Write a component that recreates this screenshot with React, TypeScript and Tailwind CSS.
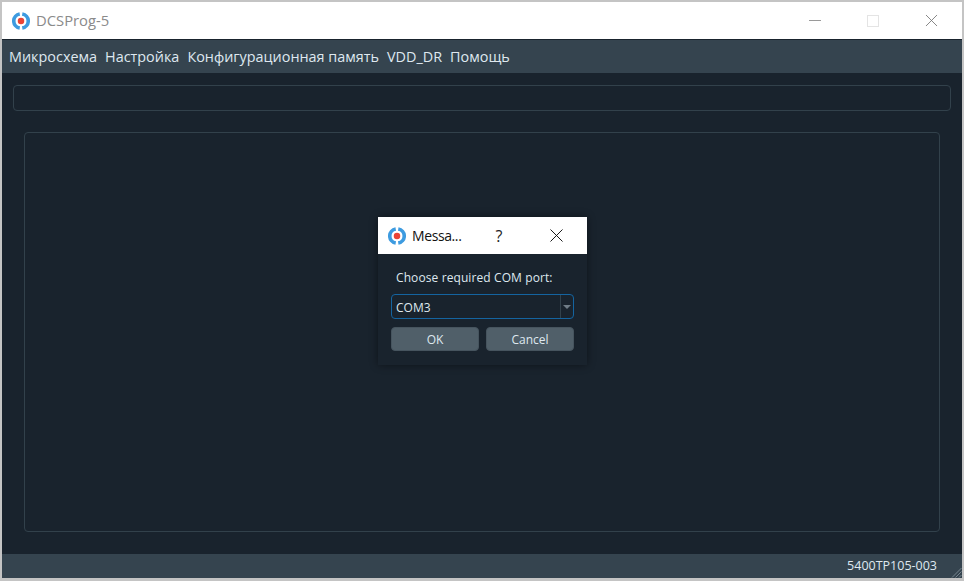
import { X } from 'lucide-react';

const AppLogo = ({ size }: { size: number }) => (
  <svg width={size} height={size} viewBox="0 0 20 20" fill="none">
    <path d="M8.6 2.2 A7.9 7.9 0 0 0 8.6 17.8" stroke="#3d9be0" strokeWidth="4" />
    <path d="M11.4 2.2 A7.9 7.9 0 0 1 11.4 17.8" stroke="#3d9be0" strokeWidth="4" />
    <circle cx="10" cy="10" r="3.6" fill="#ea4335" />
  </svg>
);

const menuItems = ['Микросхема', 'Настройка', 'Конфигурационная память', 'VDD_DR', 'Помощь'];

export default function App() {
  return (
    <div className="relative w-[964px] h-[581px] overflow-hidden bg-[#c4c4c4] font-['Open_Sans','Noto_Sans',sans-serif]">
      <div className="flex flex-col h-[578px] w-[960px] ml-[2px] pt-[2px]">
        {/* title bar */}
        <div className="flex items-center h-[37px] shrink-0 bg-white">
          <div className="ml-[10px]">
            <AppLogo size={18} />
          </div>
          <span className="ml-[6px] text-[14.8px] text-[#8a8a8a]">DCSProg-5</span>
          <div className="ml-auto flex items-center">
            <div className="w-[12px] h-px bg-[#9a9a9a] mr-[46px]" />
            <div className="w-[12px] h-[12px] border border-[#e4e4e4] mr-[42px]" />
            <X size={21} strokeWidth={1} className="text-[#777] mr-[20px]" />
          </div>
        </div>

        {/* menu */}
        <div className="flex items-center gap-[8px] h-[34px] shrink-0 pl-[7px] bg-[#35444f] border-t border-[#19232d] text-[14.4px] text-[#dfe8ef]">
          {menuItems.map((item) => (
            <span key={item}>{item}</span>
          ))}
        </div>

        {/* body */}
        <div className="flex-1 flex flex-col bg-[#19232d] pt-[12px] pb-[22px]">
          <div className="mx-[11px] h-[26px] shrink-0 rounded-[4px] border border-[#32414b]" />
          <div className="mx-[22px] mt-[21px] flex-1 rounded-[4px] border border-[#32414b]" />
        </div>

        {/* status bar */}
        <div className="relative flex items-center justify-end h-[24px] shrink-0 pr-[25px] bg-[#35444f] text-[12.5px] text-[#dfe8ef]">
          <span>5400TP105-003</span>
          <svg width="11" height="11" viewBox="0 0 11 11" className="absolute right-0 bottom-0">
            <path d="M10.5 1 L1 10.5 M10.5 4.5 L4.5 10.5 M10.5 8 L8 10.5" stroke="#76848f" strokeWidth="1" />
          </svg>
        </div>
      </div>

      {/* message dialog */}
      <div className="absolute left-[378px] top-[217px] w-[209px] h-[148px] flex flex-col bg-[#19232d] shadow-[0_0_8px_rgba(0,0,0,0.45)]">
        <div className="flex items-center h-[37px] shrink-0 bg-white">
          <div className="ml-[10px]">
            <AppLogo size={18} />
          </div>
          <span className="ml-[6px] text-[14px] tracking-[-0.4px] text-[#111]">Messa...</span>
          <span className="ml-[34px] text-[16px] text-[#222]">?</span>
          <X size={23} strokeWidth={1} className="ml-[43px] text-[#111]" />
        </div>
        <div className="flex flex-col flex-1 px-[13px] pt-[15px]">
          <span className="pl-[5px] text-[12px] leading-[18px] text-[#dfe8ef] tracking-[0.1px]">Choose required COM port:</span>
          <div className="flex items-center h-[25px] mt-[7px] rounded-[4px] border border-[#1464a0] bg-[#19232d]">
            <span className="flex-1 pl-[4px] pt-[3px] text-[12px] text-[#dfe8ef]">COM3</span>
            <div className="flex items-center justify-center w-[13px] h-full border-l border-[#32414b]">
              <div className="w-0 h-0 border-x-[4px] border-x-transparent border-t-[4px] border-t-[#6f7c86]" />
            </div>
          </div>
          <div className="flex justify-between mt-[8px]">
            <button className="w-[88px] h-[24px] pt-[2px] rounded-[4px] border border-[#46545e] bg-[#505f69] text-[12px] text-[#dfe8ef]">OK</button>
            <button className="w-[88px] h-[24px] pt-[2px] rounded-[4px] border border-[#46545e] bg-[#505f69] text-[12px] text-[#dfe8ef]">Cancel</button>
          </div>
        </div>
      </div>
    </div>
  );
}
